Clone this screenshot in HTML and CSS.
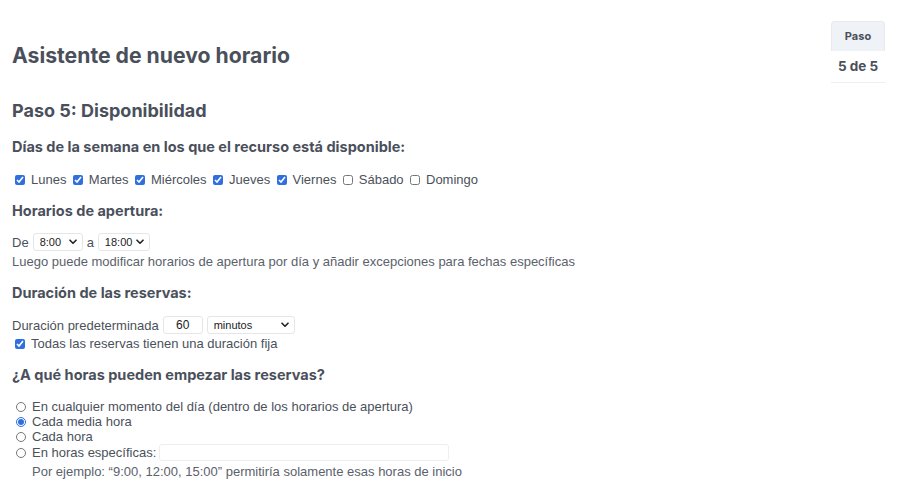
FILE: index.html
```html
<!DOCTYPE html>
<html lang="es">
<head>
<meta charset="utf-8">
<title>Asistente de nuevo horario</title>
<link rel="stylesheet" href="styles.css">
</head>
<body>
<div class="page">
  <div class="main">
    <h1 class="title">Asistente de nuevo horario</h1>
    <h2 class="step-title">Paso 5: Disponibilidad</h2>

    <h3 class="section s-days">Días de la semana en los que el recurso está disponible:</h3>
    <div class="days">
      <label class="opt"><input type="checkbox" checked> Lunes</label>
      <label class="opt"><input type="checkbox" checked> Martes</label>
      <label class="opt"><input type="checkbox" checked> Miércoles</label>
      <label class="opt"><input type="checkbox" checked> Jueves</label>
      <label class="opt"><input type="checkbox" checked> Viernes</label>
      <label class="opt"><input type="checkbox"> Sábado</label>
      <label class="opt"><input type="checkbox"> Domingo</label>
    </div>

    <h3 class="section s-open">Horarios de apertura:</h3>
    <div class="row row-open">De <span class="selwrap w-time"><select class="sel"><option>8:00</option></select><svg class="chev" viewBox="0 0 8 6" width="8" height="6"><path d="M1 1.2 L4 4.2 L7 1.2" fill="none" stroke="#222" stroke-width="1.6" stroke-linecap="round" stroke-linejoin="round"/></svg></span> a <span class="selwrap w-time2"><select class="sel"><option>18:00</option></select><svg class="chev" viewBox="0 0 8 6" width="8" height="6"><path d="M1 1.2 L4 4.2 L7 1.2" fill="none" stroke="#222" stroke-width="1.6" stroke-linecap="round" stroke-linejoin="round"/></svg></span></div>
    <div class="hint">Luego puede modificar horarios de apertura por día y añadir excepciones para fechas específicas</div>

    <h3 class="section s-dur">Duración de las reservas:</h3>
    <div class="row row-dur">Duración predeterminada <input class="num" type="text" value="60"> <span class="selwrap w-unit"><select class="sel"><option>minutos</option></select><svg class="chev" viewBox="0 0 8 6" width="8" height="6"><path d="M1 1.2 L4 4.2 L7 1.2" fill="none" stroke="#222" stroke-width="1.6" stroke-linecap="round" stroke-linejoin="round"/></svg></span></div>
    <div class="fixed"><label class="opt"><input type="checkbox" checked> Todas las reservas tienen una duración fija</label></div>

    <h3 class="section s-start">¿A qué horas pueden empezar las reservas?</h3>
    <div class="radios">
      <label class="radio-row"><input type="radio" name="start"> En cualquier momento del día (dentro de los horarios de apertura)</label>
      <label class="radio-row"><input type="radio" name="start" checked> Cada media hora</label>
      <label class="radio-row"><input type="radio" name="start"> Cada hora</label>
      <label class="radio-row"><input type="radio" name="start"> En horas específicas: <input class="hours" type="text"></label>
      <div class="example">Por ejemplo: “9:00, 12:00, 15:00” permitiría solamente esas horas de inicio</div>
    </div>
  </div>
  <div class="stepbox">
    <div class="stepbox-head">Paso</div>
    <div class="stepbox-body">5 de 5</div>
  </div>
</div>
</body>
</html>
```

FILE: styles.css
```css
html, body {
  margin: 0;
  padding: 0;
  background: #ffffff;
}
body {
  font-family: "Liberation Sans", Arial, sans-serif;
  font-size: 13px;
  color: #4b515b;
}
.page {
  display: flex;
  justify-content: space-between;
  padding: 0 15px 0 12px;
}
.main {
  flex: 1;
}
.title {
  font-family: Inter, "Noto Sans", sans-serif;
  font-weight: 700;
  font-size: 21.2px;
  color: #4a505b;
  margin: 42px 0 0 0;
  line-height: 26px;
}
.step-title {
  font-family: Inter, "Noto Sans", sans-serif;
  font-weight: 700;
  font-size: 18px;
  color: #4a505b;
  margin: 32px 0 0 0;
  line-height: 22px;
}
.section {
  font-family: Inter, "Noto Sans", sans-serif;
  font-weight: 700;
  font-size: 14.5px;
  color: #4a505b;
  margin: 0;
  line-height: 20px;
}
.s-days { margin-top: 15px; }
.s-open { margin-top: 14px; }
.s-dur { margin-top: 13px; }
.s-start { margin-top: 12px; }

.days {
  margin-top: 15px;
  display: flex;
  align-items: center;
  gap: 3.4px;
  line-height: 15px;
}
.opt {
  display: inline-flex;
  align-items: center;
}
input[type=checkbox] {
  width: 10px;
  height: 10px;
  margin: 0 6px 0 3px;
  accent-color: #2f6fe0;
}
.row {
  display: flex;
  align-items: center;
  gap: 4px;
  height: 18px;
}
.row-open { margin-top: 12px; }
.row-dur { margin-top: 13px; }
.hint {
  margin-top: 3px;
  color: #5b616b;
  line-height: 16px;
}
.selwrap {
  position: relative;
  display: inline-block;
  height: 18px;
}
.w-time { width: 50px; }
.w-time2 { width: 52px; }
.w-unit { width: 88px; }
.sel {
  -webkit-appearance: none;
  appearance: none;
  box-sizing: border-box;
  width: 100%;
  height: 18px;
  font-family: "Liberation Sans", Arial, sans-serif;
  font-size: 11px;
  border: 1px solid #e4e6ea;
  border-radius: 3px;
  background: #fff;
  color: #222;
  padding: 0 0 0 6px;
  margin: 0;
  display: block;
}
.chev {
  position: absolute;
  right: 6px;
  top: 6px;
  pointer-events: none;
}
.num {
  box-sizing: border-box;
  width: 40px;
  height: 18px;
  border: 1px solid #e4e6ea;
  border-radius: 3px;
  text-align: center;
  font-family: "Liberation Sans", Arial, sans-serif;
  font-size: 12px;
  color: #222;
  padding: 0;
  margin: 0;
}
.fixed {
  margin-top: 1px;
  line-height: 18px;
  height: 18px;
}
.radios {
  margin-top: 14px;
  display: flex;
  flex-direction: column;
}
.radio-row {
  display: flex;
  align-items: center;
  height: 15px;
  line-height: 15px;
}
.radio-row:last-of-type {
  height: 17px;
}
input[type=radio] {
  width: 10px;
  height: 10px;
  margin: 0 6px 0 4px;
  accent-color: #2f6fe0;
}
.hours {
  box-sizing: border-box;
  width: 290px;
  height: 17px;
  border: 1px solid #eceef1;
  border-radius: 3px;
  margin: 0 0 0 3px;
}
.example {
  margin-top: 3px;
  padding-left: 20px;
  color: #5b616b;
  line-height: 16px;
}
.stepbox {
  margin-top: 21px;
  width: 54px;
  align-self: flex-start;
  text-align: center;
  font-family: Inter, "Noto Sans", sans-serif;
  font-weight: 700;
}
.stepbox-head {
  background: #eff2f6;
  border: 1px solid #e6e9ee;
  border-bottom: none;
  border-radius: 4px 4px 0 0;
  font-size: 11px;
  line-height: 29px;
  color: #4a505b;
}
.stepbox-body {
  font-size: 13.5px;
  line-height: 31px;
  color: #4a505b;
  border-bottom: 1px solid #eceef1;
}
```
